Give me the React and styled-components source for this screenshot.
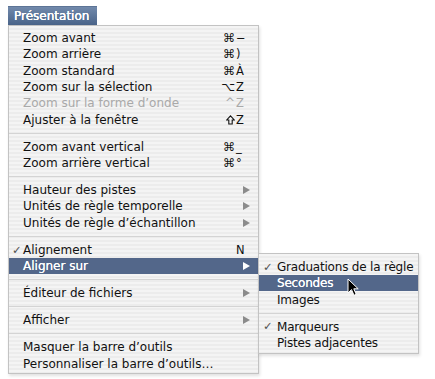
import React from 'react';
import styled, { createGlobalStyle } from 'styled-components';

const GlobalStyle = createGlobalStyle`
  html, body {
    margin: 0;
    padding: 0;
    background: #ffffff;
  }
  body {
    font-family: "DejaVu Sans", "Liberation Sans", sans-serif;
    font-size: 12px;
    color: #111;
  }
`;

const Page = styled.div`
  width: 435px;
  height: 379px;
  box-sizing: border-box;
  padding: 6px 0 0 8px;
  overflow: hidden;
`;

const Tab = styled.div`
  display: flex;
  align-items: center;
  width: 89px;
  height: 19px;
  box-sizing: border-box;
  padding-left: 6px;
  border-top: 1px solid #5d7496;
  background: linear-gradient(#7189ab, #4a6489);
  color: #fff;
  text-shadow: 0 0 0.5px #fff, 0 0 0.5px #fff;
`;

const Menu = styled.div`
  position: relative;
  width: ${(p) => p.$width}px;
  box-sizing: border-box;
  border: 1px solid #c3c3c3;
  background: repeating-linear-gradient(#f4f4f4 0 2px, #ececec 2px 4px);
  padding: ${(p) => p.$pad};
  letter-spacing: ${(p) => p.$tracking || 0}px;
  box-shadow: 1px 2px 3px rgba(0, 0, 0, 0.12);
`;

const Row = styled.div`
  position: relative;
  display: flex;
  align-items: center;
  height: 16.4px;
  padding-left: ${(p) => p.$indent}px;
  padding-right: 8px;
  white-space: nowrap;
  background: ${(p) => (p.$active ? '#53678a' : 'transparent')};
  color: ${(p) => (p.$active ? '#fff' : p.$disabled ? '#a9a9a9' : '#111')};
  text-shadow: ${(p) => (p.$active ? '0 0 0.4px #fff' : 'none')};
`;

const Check = styled.span`
  position: absolute;
  left: ${(p) => p.$left}px;
  top: 1px;
  font-size: 11.5px;
  color: ${(p) => (p.$active ? '#fff' : '#555')};
`;

const Label = styled.span`
  flex: 1;
`;

const Shortcut = styled.span`
  display: flex;
  align-items: center;
  width: 27px;
`;

const Mod = styled.span`
  display: flex;
  justify-content: flex-end;
  align-items: center;
  width: 13px;
  padding-right: 1px;
  box-sizing: border-box;
  font-size: 12px;
`;

const Key = styled.span`
  width: 14px;
  font-size: 11.5px;
`;

const Arrow = styled.span`
  margin-left: auto;
  width: 0;
  height: 0;
  border-top: 4px solid transparent;
  border-bottom: 4px solid transparent;
  border-left: 7px solid ${(p) => (p.$active ? '#fff' : '#8b8b8b')};
`;

const ArrowSlot = styled.span`
  display: flex;
  width: 27px;
`;

const Separator = styled.div`
  height: 10.6px;
  display: flex;
  align-items: center;
  &::after {
    content: '';
    flex: 1;
    height: 1px;
    background: #d4d4d4;
  }
`;

const SubMenu = styled(Menu)`
  position: absolute;
  left: 100%;
  top: -5px;
  z-index: 2;
`;

const Cursor = styled.svg`
  position: absolute;
  left: 88px;
  top: 3px;
  z-index: 3;
`;

function ShiftGlyph() {
  return (
    <svg width="9" height="10" viewBox="0 0 9 10">
      <path
        d="M4.5 0.9 L8.3 5 L6.2 5 L6.2 9 L2.8 9 L2.8 5 L0.7 5 Z"
        fill="none"
        stroke="#111"
        strokeWidth="1.1"
        strokeLinejoin="miter"
      />
    </svg>
  );
}

function Item({ label, mod, k, check, disabled, active, sub, indent = 14, checkLeft = 3, children }) {
  return (
    <Row $indent={indent} $active={active} $disabled={disabled}>
      {check && <Check $left={checkLeft} $active={active}>✓</Check>}
      <Label>{label}</Label>
      {(mod || k) && (
        <Shortcut>
          <Mod>{mod === 'shift' ? <ShiftGlyph /> : mod}</Mod>
          <Key>{k}</Key>
        </Shortcut>
      )}
      {sub && (
        <ArrowSlot>
          <Arrow $active={active} />
        </ArrowSlot>
      )}
      {children}
    </Row>
  );
}

function PointerCursor() {
  return (
    <Cursor width="13" height="19" viewBox="0 0 13 19">
      <path
        d="M1 1 L1 15 L4.5 11.6 L7 17.3 L9.2 16.3 L6.8 10.8 L11.2 10.8 Z"
        fill="#000"
        stroke="#fff"
        strokeWidth="1"
        strokeLinejoin="round"
      />
    </Cursor>
  );
}

export default function App() {
  return (
    <>
      <GlobalStyle />
      <Page>
        <Tab>Présentation</Tab>
        <Menu $width={251} $pad="3.6px 0 1px">
          <Item label="Zoom avant" mod="⌘" k="−" />
          <Item label="Zoom arrière" mod="⌘" k=")" />
          <Item label="Zoom standard" mod="⌘" k="À" />
          <Item label="Zoom sur la sélection" mod="⌥" k="Z" />
          <Item label="Zoom sur la forme d’onde" mod="^" k="Z" disabled />
          <Item label="Ajuster à la fenêtre" mod="shift" k="Z" />
          <Separator />
          <Item label="Zoom avant vertical" mod="⌘" k="_" />
          <Item label="Zoom arrière vertical" mod="⌘" k="°" />
          <Separator />
          <Item label="Hauteur des pistes" sub />
          <Item label="Unités de règle temporelle" sub />
          <Item label="Unités de règle d’échantillon" sub />
          <Separator />
          <Item label="Alignement" k="N" check />
          <Item label="Aligner sur" sub active>
            <SubMenu $width={161} $pad="4.6px 0 1.6px" $tracking={-0.2}>
              <Item label="Graduations de la règle" check indent={18} checkLeft={4} />
              <Item label="Secondes" active indent={18}>
                <PointerCursor />
              </Item>
              <Item label="Images" indent={18} />
              <Separator />
              <Item label="Marqueurs" check indent={18} checkLeft={4} />
              <Item label="Pistes adjacentes" indent={18} />
            </SubMenu>
          </Item>
          <Separator />
          <Item label="Éditeur de fichiers" sub />
          <Separator />
          <Item label="Afficher" sub />
          <Separator />
          <Item label="Masquer la barre d’outils" />
          <Item label="Personnaliser la barre d’outils…" />
        </Menu>
      </Page>
    </>
  );
}
